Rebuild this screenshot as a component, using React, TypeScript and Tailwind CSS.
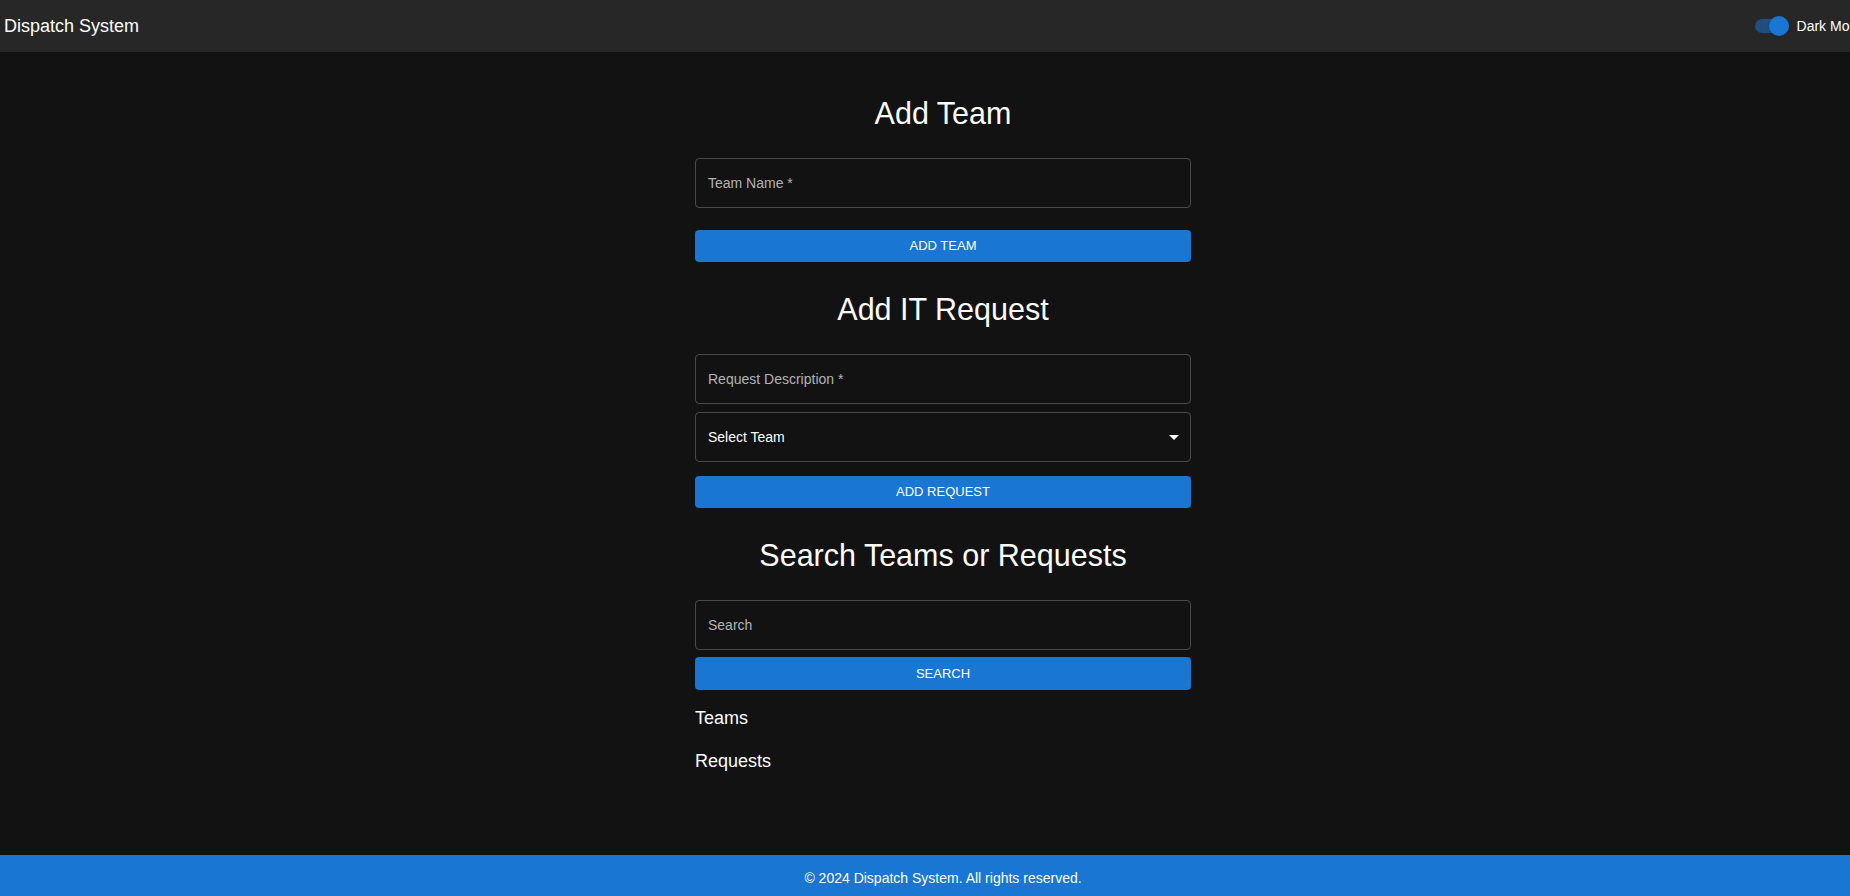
import { useState } from "react";

const font = { fontFamily: '"Liberation Sans", Arial, sans-serif' };

export default function App() {
  const [dark, setDark] = useState(true);

  return (
    <div className="h-screen w-full overflow-hidden bg-[#121212]" style={font}>
      <div className="flex min-h-screen w-[1886px] flex-col bg-[#121212] text-white">
        <header className="flex h-[52px] items-center justify-between bg-[#272727] pl-[4px] pr-[21px]">
          <h1 className="text-[18px] leading-[24px] text-white">Dispatch System</h1>
          <label className="flex cursor-pointer items-center gap-[8px] text-[14px]">
            <button
              type="button"
              onClick={() => setDark(!dark)}
              className="relative h-[14px] w-[34px] rounded-full bg-[#1f4e7f]"
            >
              <span className="absolute -top-[3px] right-0 h-[20px] w-[20px] rounded-full bg-[#1976d2] shadow" />
            </button>
            <span>Dark Mode</span>
          </label>
        </header>

        <main className="flex-1">
          <div className="mx-auto w-[496px]">
            <SectionTitle className="mt-[43px]">Add Team</SectionTitle>
            <Field className="mt-[27px]" label="Team Name *" />
            <ActionButton className="mt-[22px] h-[32px]">Add Team</ActionButton>

            <SectionTitle className="mt-[29px]">Add IT Request</SectionTitle>
            <Field className="mt-[27px]" label="Request Description *" />
            <div className="mt-[8px] flex h-[50px] items-center justify-between rounded-[4px] border border-[#4a4a4a] pl-[12px] pr-[11px] text-[14px] text-white">
              <span>Select Team</span>
              <svg width="10" height="5" viewBox="0 0 10 5" aria-hidden="true">
                <path d="M0 0l5 5 5-5z" fill="#fff" />
              </svg>
            </div>
            <ActionButton className="mt-[14px] h-[32px]">Add Request</ActionButton>

            <SectionTitle className="mt-[29px]">Search Teams or Requests</SectionTitle>
            <Field className="mt-[27px]" label="Search" />
            <ActionButton className="mt-[7px] h-[33px]">Search</ActionButton>

            <h3 className="mt-[15px] text-[18px] leading-[27px]">Teams</h3>
            <h3 className="mt-[16px] text-[18px] leading-[27px]">Requests</h3>
          </div>
        </main>

        <footer className="h-[41px] bg-[#1976d2] pt-[13px] text-center text-[14px] leading-[20px] text-white">
          © 2024 Dispatch System. All rights reserved.
        </footer>
      </div>
    </div>
  );
}

function SectionTitle({ children, className = "" }: { children: string; className?: string }) {
  return <h2 className={`text-center text-[30.5px] leading-[36px] text-white ${className}`}>{children}</h2>;
}

function Field({ label, className = "" }: { label: string; className?: string }) {
  return (
    <div className={`flex h-[50px] items-center rounded-[4px] border border-[#4a4a4a] pl-[12px] text-[14px] text-[#b3b3b3] ${className}`}>
      {label}
    </div>
  );
}

function ActionButton({ children, className = "" }: { children: string; className?: string }) {
  return (
    <button
      type="button"
      className={`flex w-full items-center justify-center rounded-[4px] bg-[#1976d2] text-[13px] uppercase text-white ${className}`}
    >
      {children}
    </button>
  );
}
